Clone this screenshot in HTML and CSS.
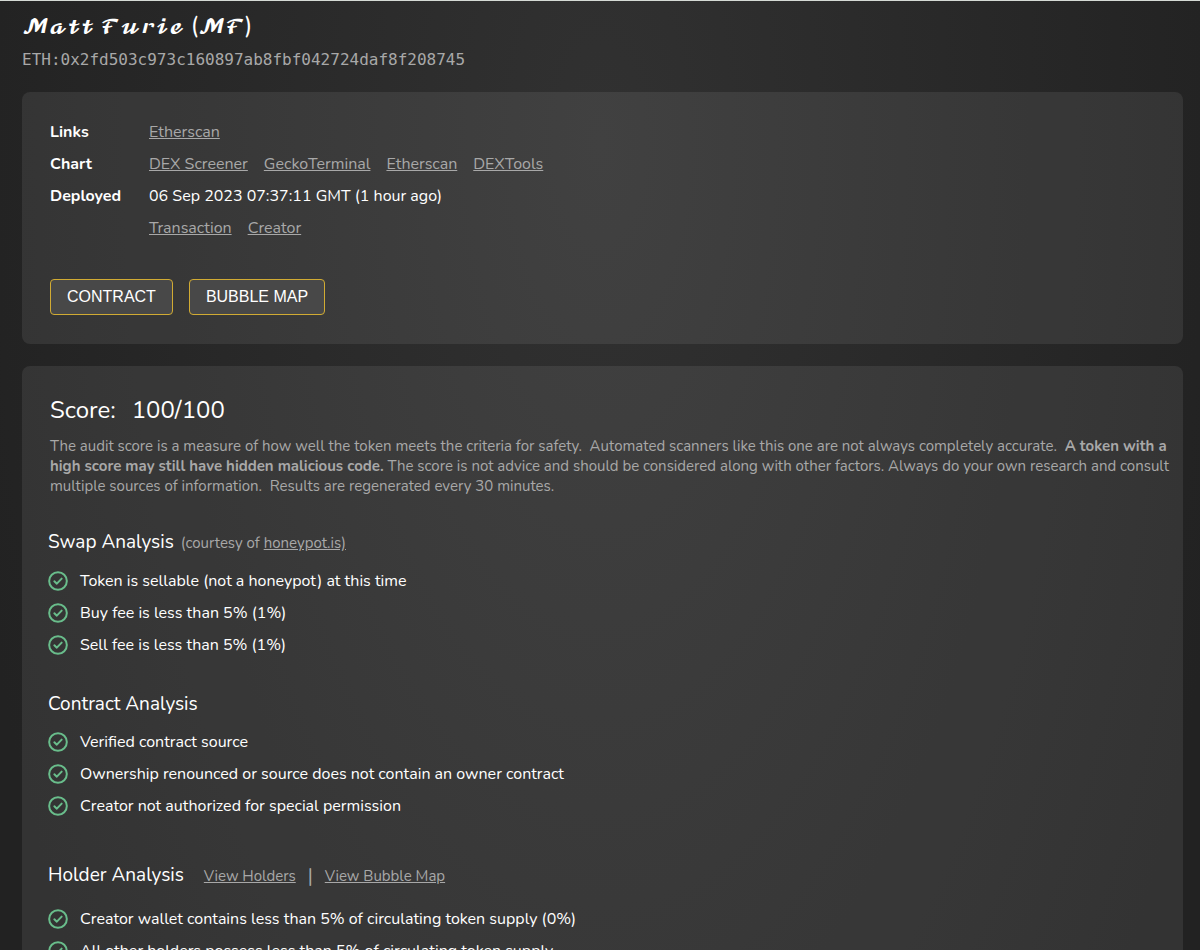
FILE: index.html
```html
<!DOCTYPE html>
<html lang="en">
<head>
<meta charset="utf-8">
<meta name="viewport" content="width=device-width, initial-scale=1">
<title>Token audit</title>
<link rel="stylesheet" href="styles.css">
</head>
<body>
<svg class="defs" aria-hidden="true">
  <symbol id="check" viewBox="0 0 24 24">
    <circle cx="12" cy="12" r="10.6" fill="none" stroke="currentColor" stroke-width="2.4"/>
    <path d="M7.6 12.4l3 2.8 5.8-6" fill="none" stroke="currentColor" stroke-width="2.4" stroke-linecap="round" stroke-linejoin="round"/>
  </symbol>
</svg>
<header class="head">
  <h1 class="title">𝓜𝓪𝓽𝓽 𝓕𝓾𝓻𝓲𝓮 <span class="paren">(</span>𝓜𝓕<span class="paren">)</span></h1>
  <p class="address">ETH:0x2fd503c973c160897ab8fbf042724daf8f208745</p>
</header>
<main class="cards">
  <section class="card">
    <dl class="facts">
      <dt>Links</dt>
      <dd><a href="#">Etherscan</a></dd>
      <dt>Chart</dt>
      <dd><a href="#">DEX Screener</a><a href="#">GeckoTerminal</a><a href="#">Etherscan</a><a href="#">DEXTools</a></dd>
      <dt>Deployed</dt>
      <dd>06 Sep 2023 07:37:11 GMT (1 hour ago)</dd>
      <dd class="second"><a href="#">Transaction</a><a href="#">Creator</a></dd>
    </dl>
    <div class="actions">
      <button type="button" class="btn">CONTRACT</button>
      <button type="button" class="btn">BUBBLE MAP</button>
    </div>
  </section>
  <section class="card report">
    <h2 class="score"><span>Score:</span><span>100/100</span></h2>
    <p class="note">The audit score is a measure of how well the token meets the criteria for safety.&nbsp; Automated scanners like this one are not always completely accurate.&nbsp; <strong>A token with a high score may still have hidden malicious code.</strong> The score is not advice and should be considered along with other factors. Always do your own research and consult multiple sources of information.&nbsp; Results are regenerated every 30 minutes.</p>
    <section class="group">
      <div class="group-head"><h3>Swap Analysis</h3><span class="courtesy">(courtesy of <a href="#">honeypot.is)</a></span></div>
      <ul class="checks">
        <li><svg class="icon"><use href="#check"/></svg>Token is sellable (not a honeypot) at this time</li>
        <li><svg class="icon"><use href="#check"/></svg>Buy fee is less than 5% (1%)</li>
        <li><svg class="icon"><use href="#check"/></svg>Sell fee is less than 5% (1%)</li>
      </ul>
    </section>
    <section class="group">
      <div class="group-head"><h3>Contract Analysis</h3></div>
      <ul class="checks">
        <li><svg class="icon"><use href="#check"/></svg>Verified contract source</li>
        <li><svg class="icon"><use href="#check"/></svg>Ownership renounced or source does not contain an owner contract</li>
        <li><svg class="icon"><use href="#check"/></svg>Creator not authorized for special permission</li>
      </ul>
    </section>
    <section class="group holders">
      <div class="group-head"><h3>Holder Analysis</h3><nav class="views"><a href="#">View Holders</a><span class="bar">|</span><a href="#">View Bubble Map</a></nav></div>
      <ul class="checks">
        <li><svg class="icon"><use href="#check"/></svg>Creator wallet contains less than 5% of circulating token supply (0%)</li>
        <li><svg class="icon"><use href="#check"/></svg>All other holders possess less than 5% of circulating token supply</li>
      </ul>
    </section>
  </section>
</main>
</body>
</html>
```
FILE: styles.css
```css
* { box-sizing: border-box; }
body {
  margin: 0;
  min-height: 100vh;
  padding: 0 17px 0 22px;
  border-top: 1px solid #d5dad5;
  background: #222 radial-gradient(ellipse 54% 150% at 50% 15%, #313131, #222 100%) fixed;
  color: #fff;
  font: 16px/32px "Nunito", "Lato", sans-serif;
}
h1, h2, h3, p, ul, dl, dd { margin: 0; padding: 0; font-weight: 400; }
a { color: #a8a8a8; }
.defs { position: absolute; width: 0; height: 0; }
.head { padding: 8px 0 16px; }
.title { height: 32px; font: 19px/32px "DejaVu Math TeX Gyre", "DejaVu Serif", serif; }
.paren { font: 24px/32px "Nunito", "Lato", sans-serif; }
.address { margin-top: 3px; color: #a8a8a8; font: 16px/32px "DejaVu Sans Mono", monospace; }
.cards { display: flex; flex-direction: column; gap: 22px; }
.card { border-radius: 8px; background: rgba(255, 255, 255, .08); padding: 24px 28px 29px; }
.facts { display: grid; grid-template-columns: 99px 1fr; }
.facts dt { font-weight: 700; }
.facts dd { display: flex; flex-wrap: wrap; column-gap: 16px; }
.facts .second { grid-column: 2; }
.actions { display: flex; gap: 16px; margin-top: 35px; }
.btn {
  height: 36px;
  padding: 0 16px;
  border: 1px solid #d1ab33;
  border-radius: 4px;
  background: #484848;
  color: #fff;
  font: 16px "Liberation Sans", Arial, sans-serif;
}
.report { padding: 28px 12px 29px 28px; }
.score { display: flex; gap: 16px; font-size: 24px; line-height: 32px; }
.note { margin: 10px 0 30px; color: #a8a8a8; font-size: 15px; line-height: 20px; }
.group { margin: 27px 0 0 -2px; }
.group-head { display: flex; align-items: baseline; gap: 7px; margin-bottom: 6px; color: #a8a8a8; font-size: 15px; }
.group-head h3 { color: #fff; font-size: 19px; }
.checks { list-style: none; }
.checks li { display: flex; align-items: center; gap: 12px; }
.icon { width: 20px; height: 20px; color: #69bd8b; }
.note + .group { margin-top: 0; }
.holders { margin-top: 37px; }
.holders .group-head { gap: 20px; margin-bottom: 11px; }
.views { display: flex; gap: 12px; }
.bar { font-size: 19px; }
```
